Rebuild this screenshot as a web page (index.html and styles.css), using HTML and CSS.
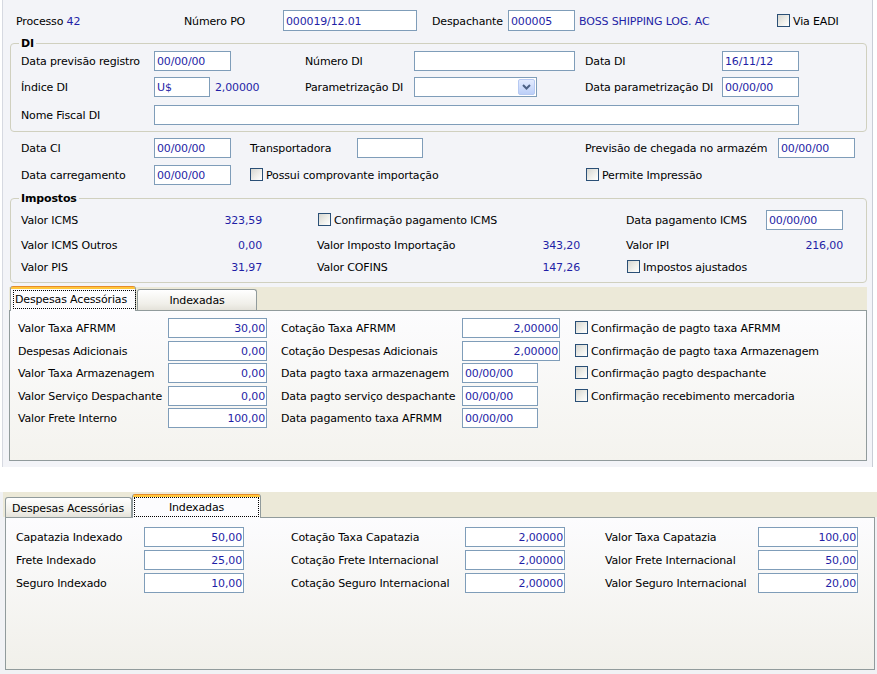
FILE: index.html
```html
<!DOCTYPE html>
<html lang="pt-BR">
<head>
<meta charset="utf-8">
<title>Processo 42</title>
<link rel="stylesheet" href="styles.css">
</head>
<body>
<div class="screen1">
  <div class="toprow">
    <div class="lbl">Processo <span class="val">42</span></div>
    <div class="lbl">Número PO</div>
    <div class="tb w134">000019/12.01</div>
    <div class="lbl pl15">Despachante</div>
    <div class="tb w67">000005</div>
    <div class="lbl pl4"><span class="val">BOSS SHIPPING LOG. AC</span></div>
    <div class="chk"><span class="box"></span>Via EADI</div>
  </div>

  <fieldset class="group di">
    <legend>DI</legend>
    <div class="digrid">
      <div class="lbl">Data previsão registro</div>
      <div><div class="tb w77">00/00/00</div></div>
      <div class="lbl">Número DI</div>
      <div><div class="tb w161"></div></div>
      <div class="lbl">Data DI</div>
      <div><div class="tb w77">16/11/12</div></div>

      <div class="lbl">Índice DI</div>
      <div class="pair"><div class="tb w56">U$</div><span class="val lbl">2,00000</span></div>
      <div class="lbl">Parametrização DI</div>
      <div>
        <div class="sel">
          <span class="selbtn"><svg width="9" height="6" viewBox="0 0 9 6"><path d="M1 1 L4.5 4.5 L8 1" fill="none" stroke="#4d6185" stroke-width="2"/></svg></span>
        </div>
      </div>
      <div class="lbl">Data parametrização DI</div>
      <div><div class="tb w77">00/00/00</div></div>

      <div class="lbl">Nome Fiscal DI</div>
      <div class="span-rest"><div class="tb wfull"></div></div>
    </div>
  </fieldset>

  <div class="cigrid">
    <div class="lbl">Data CI</div>
    <div><div class="tb w77">00/00/00</div></div>
    <div class="lbl">Transportadora</div>
    <div><div class="tb w66"></div></div>
    <div class="lbl">Previsão de chegada no armazém</div>
    <div><div class="tb w77">00/00/00</div></div>

    <div class="lbl">Data carregamento</div>
    <div><div class="tb w77">00/00/00</div></div>
    <div class="chk span2"><span class="box"></span>Possui comprovante importação</div>
    <div class="chk span2 ml1"><span class="box"></span>Permite Impressão</div>
  </div>

  <fieldset class="group imp">
    <legend>Impostos</legend>
    <div class="impgrid">
      <div class="cell"><span>Valor ICMS</span><span class="val">323,59</span></div>
      <div class="cell c2"><div class="chk ml1"><span class="box"></span>Confirmação pagamento ICMS</div></div>
      <div class="cell c3"><span>Data pagamento ICMS</span><div class="tb w77">00/00/00</div></div>

      <div class="cell"><span>Valor ICMS Outros</span><span class="val">0,00</span></div>
      <div class="cell c2"><span>Valor Imposto Importação</span><span class="val">343,20</span></div>
      <div class="cell c3"><span>Valor IPI</span><span class="val">216,00</span></div>

      <div class="cell"><span>Valor PIS</span><span class="val">31,97</span></div>
      <div class="cell c2"><span>Valor COFINS</span><span class="val">147,26</span></div>
      <div class="cell c3"><div class="chk ml1"><span class="box"></span>Impostos ajustados</div></div>
    </div>
  </fieldset>

  <div class="tabs tabs1">
    <div class="tabhead">
      <div class="tab active t1a"><span class="focus">Despesas Acessórias</span></div>
      <div class="tab t1b">Indexadas</div>
    </div>
    <div class="tabpage page1">
      <div class="p1grid">
        <div class="lbl">Valor Taxa AFRMM</div>
        <div><div class="tb num w99">30,00</div></div>
        <div class="lbl">Cotação Taxa AFRMM</div>
        <div><div class="tb num w98">2,00000</div></div>
        <div class="chk"><span class="box"></span>Confirmação de pagto taxa AFRMM</div>

        <div class="lbl">Despesas Adicionais</div>
        <div><div class="tb num w99">0,00</div></div>
        <div class="lbl">Cotação Despesas Adicionais</div>
        <div><div class="tb num w98">2,00000</div></div>
        <div class="chk"><span class="box"></span>Confirmação de pagto taxa Armazenagem</div>

        <div class="lbl">Valor Taxa Armazenagem</div>
        <div><div class="tb num w99">0,00</div></div>
        <div class="lbl">Data pagto taxa armazenagem</div>
        <div><div class="tb w76">00/00/00</div></div>
        <div class="chk"><span class="box"></span>Confirmação pagto despachante</div>

        <div class="lbl">Valor Serviço Despachante</div>
        <div><div class="tb num w99">0,00</div></div>
        <div class="lbl">Data pagto serviço despachante</div>
        <div><div class="tb w76">00/00/00</div></div>
        <div class="chk"><span class="box"></span>Confirmação recebimento mercadoria</div>

        <div class="lbl">Valor Frete Interno</div>
        <div><div class="tb num w99">100,00</div></div>
        <div class="lbl">Data pagamento taxa AFRMM</div>
        <div><div class="tb w76">00/00/00</div></div>
        <div></div>
      </div>
    </div>
  </div>
</div>

<div class="screen2">
  <div class="tabs tabs2">
    <div class="tabhead head2">
      <div class="tab t2a">Despesas Acessórias</div>
      <div class="tab active t2b"><span class="focus">Indexadas</span></div>
    </div>
    <div class="tabpage page2">
      <div class="p2grid">
        <div class="lbl">Capatazia Indexado</div>
        <div><div class="tb num w100">50,00</div></div>
        <div class="lbl">Cotação Taxa Capatazia</div>
        <div><div class="tb num w100">2,00000</div></div>
        <div class="lbl">Valor Taxa Capatazia</div>
        <div><div class="tb num w100">100,00</div></div>

        <div class="lbl">Frete Indexado</div>
        <div><div class="tb num w100">25,00</div></div>
        <div class="lbl">Cotação Frete Internacional</div>
        <div><div class="tb num w100">2,00000</div></div>
        <div class="lbl">Valor Frete Internacional</div>
        <div><div class="tb num w100">50,00</div></div>

        <div class="lbl">Seguro Indexado</div>
        <div><div class="tb num w100">10,00</div></div>
        <div class="lbl">Cotação Seguro Internacional</div>
        <div><div class="tb num w100">2,00000</div></div>
        <div class="lbl">Valor Seguro Internacional</div>
        <div><div class="tb num w100">20,00</div></div>
      </div>
    </div>
  </div>
</div>
</body>
</html>
```

FILE: styles.css
```css
* { box-sizing: border-box; }

html, body {
  margin: 0;
  padding: 0;
  background: #ffffff;
}

body {
  width: 877px;
  height: 674px;
  overflow: hidden;
  font-family: "DejaVu Sans", Verdana, sans-serif;
  font-size: 11px;
  letter-spacing: -0.15px;
  color: #000;
}

.val { color: #1f1fa6; }

.lbl {
  height: 20px;
  line-height: 22px;
  white-space: nowrap;
}

.pl15 { padding-left: 15px; }
.pl4 { padding-left: 4px; }
.ml1 { margin-left: 1px; }

/* text boxes */
.tb {
  height: 20px;
  line-height: 20px;
  border: 1px solid #7f9db9;
  background: #fff;
  color: #1f1fa6;
  padding: 0 2px;
  white-space: nowrap;
  overflow: hidden;
}
.tb.num { text-align: right; padding-right: 1px; }
.w56 { width: 56px; }
.w66 { width: 66px; }
.w67 { width: 67px; }
.w76 { width: 76px; }
.w77 { width: 77px; }
.w98 { width: 98px; }
.w99 { width: 99px; }
.w100 { width: 100px; }
.w134 { width: 134px; }
.w161 { width: 161px; }
.wfull { width: 645px; }

/* combo */
.sel {
  width: 123px;
  height: 20px;
  border: 1px solid #7f9db9;
  background: #fff;
  display: flex;
  justify-content: flex-end;
  padding: 1px;
}
.selbtn {
  width: 17px;
  height: 16px;
  border: 1px solid #b6c9f2;
  border-radius: 2px;
  background: linear-gradient(#e3ebfe, #bccff8);
  display: flex;
  align-items: center;
  justify-content: center;
}

/* checkbox */
.chk {
  display: flex;
  align-items: flex-start;
  gap: 3px;
  height: 20px;
  line-height: 22px;
  white-space: nowrap;
}
.box {
  flex: none;
  width: 13px;
  height: 13px;
  margin-top: 3px;
  border: 1px solid #2a4f76;
  background: linear-gradient(135deg, #d6d6d0 0%, #f1f1ed 60%, #ffffff 100%);
}

/* screen 1 */
.screen1 {
  width: 871px;
  height: 467px;
  margin-left: 2px;
  border-left: 1px solid #d6d9e1;
  border-right: 1px solid #c9cdd6;
  background: #f3f4f8;
  padding-top: 10px;
  overflow: hidden;
}

.toprow {
  display: grid;
  grid-template-columns: 168px 99px 134px 91px 67px 202px auto;
  align-items: center;
  height: 21px;
  margin-left: 13px;
}
.toprow .tb { height: 21px; line-height: 21px; }

.group {
  margin: 0;
  border: 1px solid #d0d0bf;
  border-radius: 4px;
  min-width: 0;
}
.group legend {
  font-weight: bold;
  line-height: 13px;
  padding: 0 2px;
  margin-left: -2px;
}

.di {
  margin: 6px 0 0 7px;
  width: 857px;
  padding: 1px 0 6px 10px;
}
.digrid {
  display: grid;
  grid-template-columns: 133px 151px 109px 171px 137px 77px;
  grid-template-rows: 26px 28px 20px;
  align-items: start;
}
.pair { display: flex; align-items: flex-start; gap: 5px; }
.span-rest { grid-column: 2 / -1; }

.cigrid {
  display: grid;
  grid-template-columns: 133px 96px 107px 228px 193px 77px;
  grid-template-rows: 27px 20px;
  align-items: start;
  margin: 6px 0 0 18px;
}
.span2 { grid-column: span 2; }

.imp {
  margin: 7px 0 0 7px;
  width: 857px;
  padding: 5px 0 5px 10px;
}
.impgrid {
  display: grid;
  grid-template-columns: 241px 318px 263px;
  grid-template-rows: 25px 22px 20px;
  align-items: start;
}
.cell {
  display: flex;
  justify-content: space-between;
  align-items: flex-start;
  height: 20px;
  line-height: 22px;
  white-space: nowrap;
}
.c2 { padding-left: 55px; }
.c3 { padding-left: 46px; }

/* tabs */
.tabhead {
  display: flex;
  align-items: flex-end;
}
.tab {
  border: 1px solid #919b9c;
  border-bottom: none;
  border-radius: 3px 3px 0 0;
  background: linear-gradient(#ffffff, #f0efe9 70%, #e4e2da);
  white-space: nowrap;
  text-align: center;
}
.tab.active {
  position: relative;
  z-index: 1;
  margin-bottom: -1px;
  border-top: none;
  background: linear-gradient(#e68b2c 0 1px, #ffc73c 1px 3px, #fcfcfe 3px);
}
.focus {
  display: inline-block;
  outline: 1px dotted #000;
  outline-offset: 0;
}
.tabpage {
  border: 1px solid #919b9c;
  background: linear-gradient(#fcfcfe, #f4f3ee);
}

.tabs1 {
  margin: 3px 0 0 6px;
  width: 858px;
}
.tabs1 .tabhead {
  height: 24px;
  background: linear-gradient(#f3f4f8 0 1px, #ece9d8 1px);
}
.t1a {
  margin-left: 1px;
  width: 126px;
  height: 25px;
  padding: 5px 2px 0 3px;
  text-align: left;
}
.t1a .focus { width: 121px; height: 17px; line-height: 18px; padding-left: 1px; }
.t1b {
  margin-left: 1px;
  width: 120px;
  height: 21px;
  line-height: 21px;
}
.page1 {
  height: 151px;
  padding: 7px 0 0 8px;
}
.p1grid {
  display: grid;
  grid-template-columns: 150px 113px 181px 113px auto;
  grid-auto-rows: 20px;
  row-gap: 2.5px;
}

/* screen 2 */
.screen2 {
  margin-top: 25px;
  height: 182px;
  padding: 0 0 0 3px;
  background: #f1f2f5;
}
.tabs2 { width: 874px; }
.head2 {
  height: 25px;
  background: #ece9d8;
}
.t2a {
  margin-left: 2px;
  width: 127px;
  height: 20px;
  line-height: 22px;
  text-align: left;
  padding-left: 6px;
}
.t2b {
  width: 129px;
  height: 24px;
  padding-top: 4px;
  margin-left: 0;
}
.t2b .focus { width: 123px; height: 18px; line-height: 19px; }
.page2 {
  margin-left: 2px;
  width: 870px;
  height: 153px;
  padding: 9px 0 0 10px;
  background: linear-gradient(#fcfcfe, #f1f0ea);
}
.p2grid {
  display: grid;
  grid-template-columns: 128px 147px 174px 140px 153px 100px;
  grid-auto-rows: 20px;
  row-gap: 3px;
}
```
